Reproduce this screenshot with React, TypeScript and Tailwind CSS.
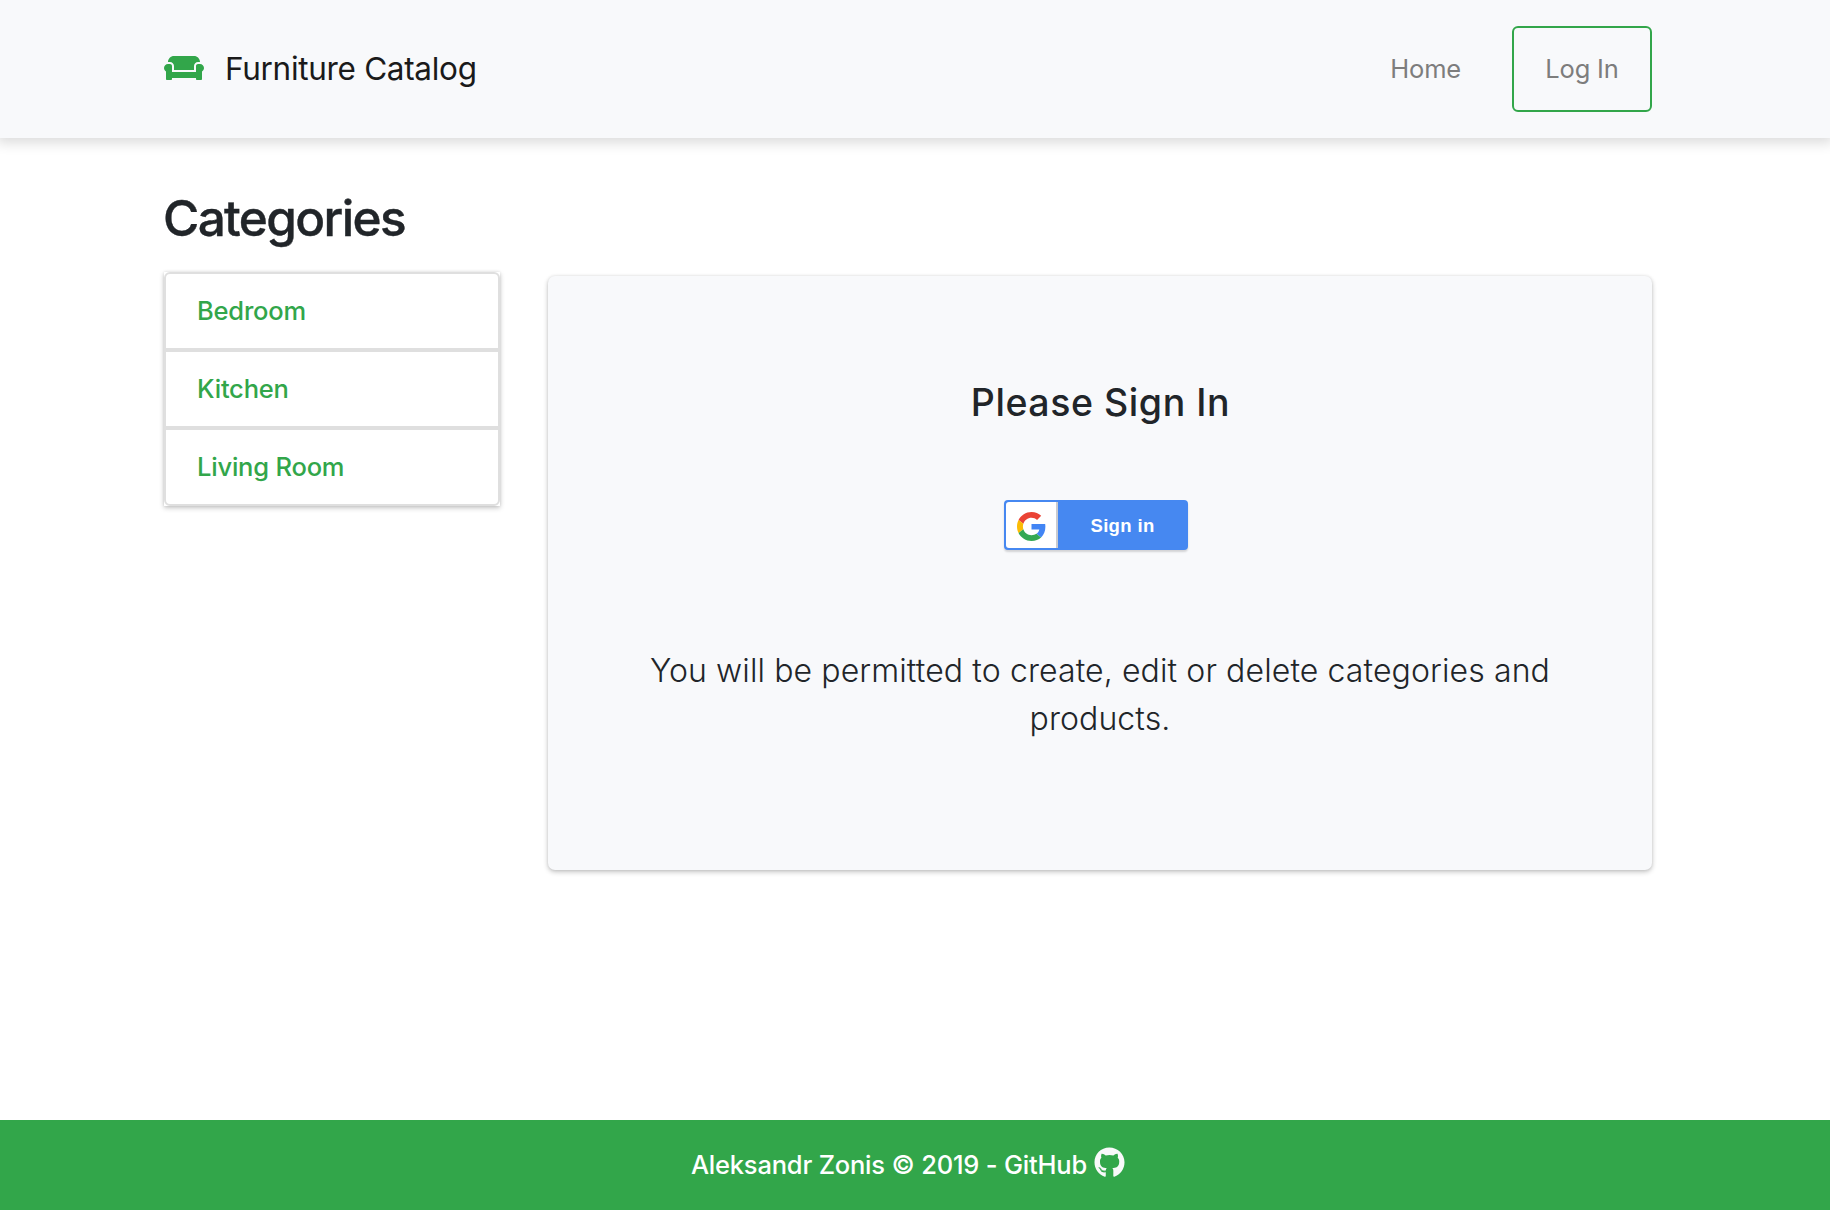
import React from "react";
import { FaCouch, FaGithub } from "react-icons/fa";

const categories = ["Bedroom", "Kitchen", "Living Room"];

function GoogleLogo() {
  return (
    <svg viewBox="0 0 48 48" className="size-[29px]">
      <path fill="#EA4335" d="M24 9.5c3.54 0 6.71 1.22 9.21 3.6l6.85-6.85C35.9 2.38 30.47 0 24 0 14.62 0 6.51 5.38 2.56 13.22l7.98 6.19C12.43 13.72 17.74 9.5 24 9.5z" />
      <path fill="#4285F4" d="M46.98 24.55c0-1.57-.15-3.09-.38-4.55H24v9.02h12.94c-.58 2.96-2.26 5.48-4.78 7.18l7.73 6c4.51-4.18 7.09-10.36 7.09-17.65z" />
      <path fill="#FBBC05" d="M10.53 28.59c-.48-1.45-.76-2.99-.76-4.59s.27-3.14.76-4.59l-7.98-6.19C.92 16.46 0 20.12 0 24c0 3.88.92 7.54 2.56 10.78l7.97-6.19z" />
      <path fill="#34A853" d="M24 48c6.48 0 11.93-2.13 15.89-5.81l-7.73-6c-2.15 1.45-4.92 2.3-8.16 2.3-6.26 0-11.57-4.22-13.47-9.91l-7.98 6.19C6.51 42.62 14.62 48 24 48z" />
    </svg>
  );
}

function Header() {
  return (
    <header className="h-[138px] bg-[#f8f9fb] pr-[178px] pl-[164px] shadow-[0_2px_12px_3px_rgba(0,0,0,0.14)]">
      <div className="flex h-full items-center">
        <a className="flex items-center text-[31.5px] tracking-[-0.31px] text-[#1a1a1a]">
          <FaCouch className="mr-[21px] mb-[2px] h-8 w-10 text-[#32a64a]" />
          Furniture Catalog
        </a>
        <nav className="ml-auto flex items-center text-[25.5px] text-[#7d7d7d]">
          <a className="mr-[51px] tracking-[-0.2px]">Home</a>
          <a className="flex h-[86px] w-[140px] items-center justify-center rounded-[6px] border-2 border-[#32a64a] tracking-[-0.17px]">
            Log In
          </a>
        </nav>
      </div>
    </header>
  );
}

function CategoryList() {
  return (
    <ul className="h-[234px] w-[336px] shadow-[0_2px_5px_rgba(0,0,0,0.22),0_0_3px_rgba(0,0,0,0.1)]">
      {categories.map((name) => (
        <li
          key={name}
          className="flex h-[78px] items-center border-2 border-[#dfdfdf] bg-white pl-[31px] text-[25.5px] font-medium tracking-[-0.2px] text-[#32a64a] first:rounded-t-[6px] last:rounded-b-[6px]"
        >
          {name}
        </li>
      ))}
    </ul>
  );
}

function SignInCard() {
  return (
    <section className="mt-[4px] flex h-[594px] w-[1104px] flex-col items-center rounded-[7px] bg-[#f8f9fb] pt-[103px] text-[#212529] shadow-[0_2px_5px_rgba(0,0,0,0.24),0_0_3px_rgba(0,0,0,0.08)]">
      <h2 className="ml-px text-[37.5px] leading-[48px] font-medium tracking-[0.55px]">Please Sign In</h2>
      <button className="mt-[73px] mr-[8px] flex h-[50px] w-[184px] items-center rounded-[4px] bg-[#4688f1] p-[2px] shadow-[0_2px_2px_rgba(0,0,0,0.15)]">
        <span className="flex h-full w-[52px] items-center justify-center rounded-l-[3px] border-r-2 border-[#c9cbd0] bg-white pt-[3px]">
          <GoogleLogo />
        </span>
        <span className="flex-1 pt-px pl-px text-center font-['Liberation_Sans',sans-serif] text-[18.5px] font-bold tracking-[0.35px] text-white">
          Sign in
        </span>
      </button>
      <p className="mt-[97px] w-[920px] text-center text-[32px] leading-[48px] font-light tracking-[0.11px]">
        You will be permitted to create, edit or delete categories and products.
      </p>
    </section>
  );
}

export default function App() {
  return (
    <div className="flex h-[1210px] w-[1830px] flex-col overflow-hidden bg-white font-[Inter,sans-serif]">
      <Header />
      <main className="flex-1 pt-[50px] pr-[178px] pl-[164px]">
        <h1 className="-ml-px text-[49.5px] leading-[60px] font-medium tracking-[-1.65px] text-[#212529] [-webkit-text-stroke:0.4px_#212529]">Categories</h1>
        <div className="mt-[24px] flex items-start justify-between">
          <CategoryList />
          <SignInCard />
        </div>
      </main>
      <footer className="flex h-[90px] items-center justify-center bg-[#32a64a] pr-[14px] text-[25.5px] font-medium text-white">
        <span className="tracking-[-0.2px]">Aleksandr Zonis © 2019 - GitHub</span>
        <FaGithub className="mb-[5px] ml-[7px] size-[31px] text-[#f8f9fa]" />
      </footer>
    </div>
  );
}
